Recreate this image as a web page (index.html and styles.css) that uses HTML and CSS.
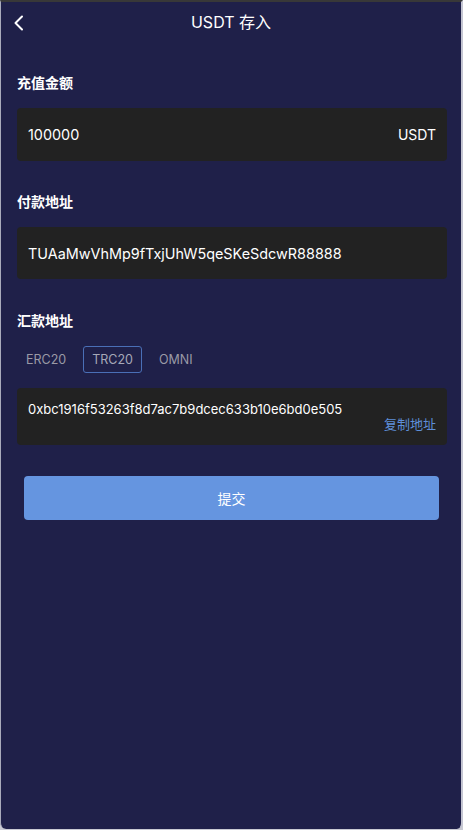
FILE: index.html
```html
<!DOCTYPE html>
<html lang="zh-CN">
<head>
  <meta charset="UTF-8">
  <meta name="viewport" content="width=device-width, initial-scale=1.0">
  <title>USDT 存入</title>
  <link rel="stylesheet" href="styles.css">
</head>
<body>
  <div class="screen">
    <!-- 顶部导航 -->
    <div class="header">
      <span class="back">
        <svg width="12" height="16" viewBox="0 0 12 16"><polyline points="9,1.5 2.5,8 9,14.5" fill="none" stroke="#fff" stroke-width="2" stroke-linecap="round" stroke-linejoin="round"/></svg>
      </span>
      <span class="title">USDT 存入</span>
    </div>

    <div class="content">
      <div class="label">充值金额</div>
      <div class="field">
        <span class="value">100000</span>
        <span class="unit">USDT</span>
      </div>

      <div class="label">付款地址</div>
      <div class="field">
        <span class="value">TUAaMwVhMp9fTxjUhW5qeSKeSdcwR88888</span>
      </div>

      <div class="label">汇款地址</div>
      <div class="tabs">
        <span class="tab">ERC20</span>
        <span class="tab active">TRC20</span>
        <span class="tab">OMNI</span>
      </div>
      <div class="address-box">
        <div class="address">0xbc1916f53263f8d7ac7b9dcec633b10e6bd0e505</div>
        <div class="copy">复制地址</div>
      </div>

      <div class="button">提交</div>
    </div>
  </div>
</body>
</html>
```
FILE: styles.css
```css
html, body {
  margin: 0;
  padding: 0;
  background-color: #c9cad3;
}
body {
  font-family: Inter, "Noto Sans CJK SC", sans-serif;
  color: #fff;
}
.screen {
  box-sizing: border-box;
  width: 463px;
  height: 829px;
  background-color: #1f2049;
  border-top: 2px solid #383838;
  border-left: 1px solid #a9abbb;
  border-right: 2px solid #c4c5d2;
  border-radius: 0 0 6px 6px;
}
.header {
  height: 42px;
  position: relative;
  display: flex;
  align-items: center;
  justify-content: center;
}
.back {
  position: absolute;
  left: 12px;
  top: 13px;
  display: flex;
}
.title {
  font-size: 16px;
  line-height: 20px;
  margin-top: -2px;
}
.content {
  padding: 29px 14px 0 16px;
  display: flex;
  flex-direction: column;
}
.label {
  font-size: 14px;
  font-weight: bold;
  line-height: 20px;
  margin-bottom: 15px;
}
.field {
  background-color: #222222;
  border-radius: 4px;
  height: 53px;
  padding: 0 11px 0 11px;
  display: flex;
  align-items: center;
  justify-content: space-between;
  font-size: 14.4px;
  margin-bottom: 31px;
}
.field + .label + .field {
  height: 52px;
  margin-bottom: 32px;
}
.field .unit {
  font-size: 14px;
}
.tabs {
  display: flex;
  align-items: center;
  height: 27px;
  margin-bottom: 15px;
}
.tab {
  font-size: 12.5px;
  color: #9a9aa6;
  padding: 0 8px;
  height: 27px;
  line-height: 25px;
  box-sizing: border-box;
  border: 1px solid transparent;
  border-radius: 3px;
}
.tab.active {
  color: #a6a8b8;
  border-color: #4a6fb6;
  margin: 0 8px;
}
.address-box {
  background-color: #222222;
  border-radius: 4px;
  height: 57px;
  box-sizing: border-box;
  padding: 13px 11px 0 11px;
  margin-bottom: 31px;
}
.address {
  font-size: 13px;
  line-height: 16px;
}
.copy {
  color: #5f8fd8;
  font-size: 13px;
  line-height: 16px;
  text-align: right;
  margin-top: -1px;
}
.button {
  margin: 0 8px 0 7px;
  height: 44px;
  background-color: #6595e0;
  border-radius: 4px;
  display: flex;
  align-items: center;
  justify-content: center;
  font-size: 14px;
}
```
